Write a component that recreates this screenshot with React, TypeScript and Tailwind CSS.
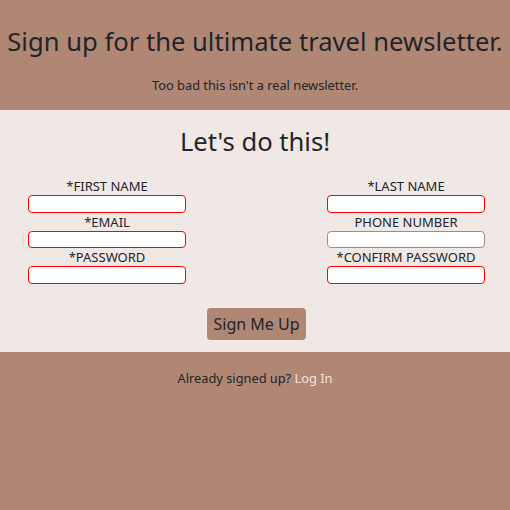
export default function App() {
  const left = [
    { label: "*FIRST NAME", req: true },
    { label: "*EMAIL", req: true },
    { label: "*PASSWORD", req: true },
  ];
  const right = [
    { label: "*LAST NAME", req: true },
    { label: "PHONE NUMBER", req: false },
    { label: "*CONFIRM PASSWORD", req: true },
  ];

  const field = (f: { label: string; req: boolean }) => (
    <div key={f.label} className="flex flex-col items-center">
      <label className="text-[13px] leading-[18px] text-[#212529]">{f.label}</label>
      <input
        className={`w-[158px] h-[17.5px] bg-white rounded-[4px] border ${f.req ? "border-[#ff0000]" : "border-[#b08775]"}`}
      />
    </div>
  );

  return (
    <div className="w-[510px] h-[510px] bg-[#b08775] text-[#212529]" style={{ fontFamily: '"Noto Sans", "Open Sans", sans-serif' }}>
      <header className="h-[110px] flex flex-col items-center pt-[24px]">
        <h1 className="text-[25.6px] leading-[36px]">Sign up for the ultimate travel newsletter.</h1>
        <p className="text-[12.8px] leading-[18px] mt-[16px]">Too bad this isn't a real newsletter.</p>
      </header>
      <section className="h-[242px] bg-[#f0e8e5] flex flex-col items-center pt-[14px]">
        <h2 className="text-[25.6px] leading-[36px]">Let's do this!</h2>
        <div className="w-full flex justify-between pl-[28px] pr-[25px] mt-[17px]">
          <div className="flex flex-col">{left.map(field)}</div>
          <div className="flex flex-col">{right.map(field)}</div>
        </div>
        <button className="mt-[24px] ml-[3px] h-[32px] px-[6px] bg-[#b08775] rounded-[4px] text-[16px] text-[#212529]">Sign Me Up</button>
      </section>
      <footer className="flex justify-center pt-[17px]">
        <p className="text-[12.8px] leading-[18px]">
          Already signed up? <a className="text-[#f5e1da]">Log In</a>
        </p>
      </footer>
    </div>
  );
}
